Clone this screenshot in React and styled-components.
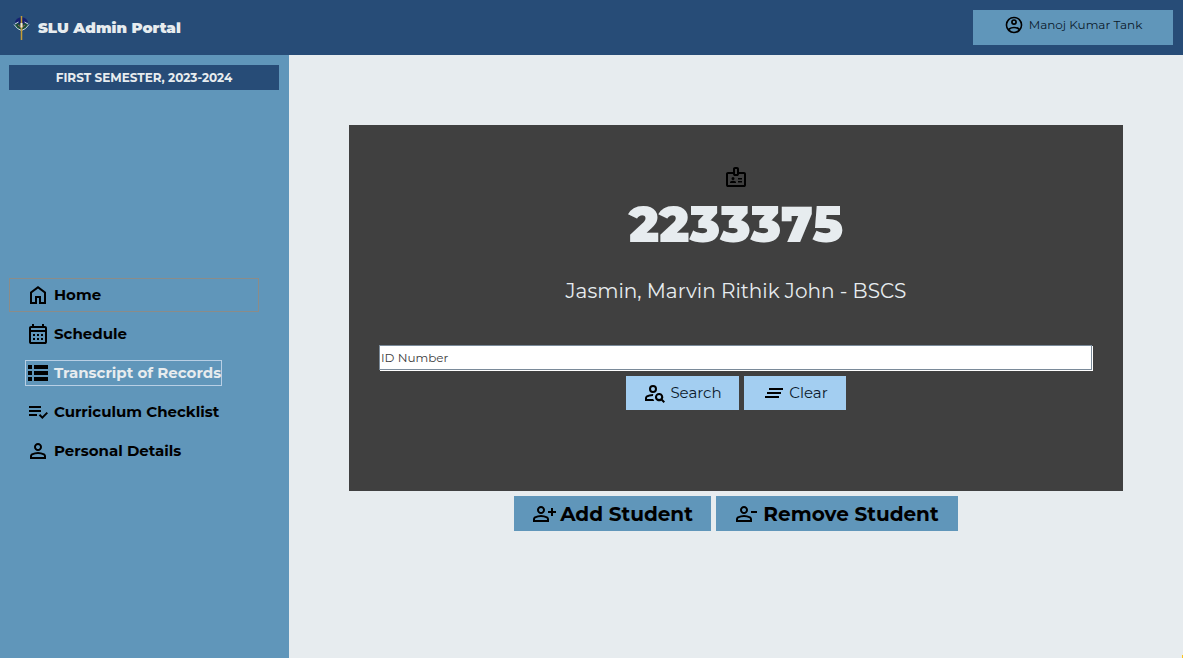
import React, { useState } from 'react';
import styled, { createGlobalStyle, ThemeProvider } from 'styled-components';

const theme = {
  navy: '#274c77',
  blue: '#6096ba',
  sky: '#a3cef1',
  mist: '#e7ecef',
  stone: '#8b8c89',
  charcoal: '#404040',
};

const GlobalStyle = createGlobalStyle`
  *, *::before, *::after { box-sizing: border-box; }
  body {
    margin: 0;
    background: ${theme.mist};
    font-family: Montserrat, Inter, "Open Sans", sans-serif;
    color: #000;
  }
  button, input { font-family: inherit; color: inherit; }
`;

const Page = styled.div`
  display: flex;
  flex-direction: column;
  min-height: 100vh;
`;

const Header = styled.header`
  display: flex;
  align-items: center;
  justify-content: space-between;
  height: 55px;
  padding: 0 10px 0 13px;
  background: ${({ theme }) => theme.navy};
`;

const Brand = styled.h1`
  display: flex;
  align-items: center;
  gap: 8px;
  margin: 0;
  font-size: 15px;
  line-height: 24px;
  font-weight: 900;
  color: ${({ theme }) => theme.mist};
`;

const Body = styled.div`
  display: flex;
  flex: 1;
`;

const Sidebar = styled.aside`
  display: flex;
  flex-direction: column;
  flex: none;
  width: 289px;
  padding: 10px 10px 2px 9px;
  background: ${({ theme }) => theme.blue};
`;

const Term = styled.div`
  background: ${({ theme }) => theme.navy};
  color: ${({ theme }) => theme.mist};
  font-size: 12px;
  line-height: 25px;
  font-weight: 700;
  text-align: center;
`;

const Nav = styled.nav`
  display: flex;
  flex-direction: column;
  gap: 5px;
  width: 250px;
  margin: auto 0;
`;

const NavButton = styled.button`
  display: flex;
  align-items: center;
  height: 34px;
  padding: 0 0 0 15px;
  border: 1px solid ${({ $outlined, theme }) => ($outlined ? theme.stone : 'transparent')};
  background: none;
  font-size: 15px;
  line-height: 24px;
  font-weight: 700;
  text-align: left;
  color: ${({ $active, theme }) => ($active ? theme.mist : '#000')};
  cursor: pointer;
`;

const NavLabel = styled.span`
  display: flex;
  align-items: center;
  gap: 4px;
  border: 1px solid ${({ $active }) => ($active ? '#b8cfe5' : 'transparent')};
  white-space: nowrap;
`;

const Main = styled.main`
  display: flex;
  flex-direction: column;
  flex: 1;
  gap: 5px;
  min-width: 0;
  padding: 70px 60px;
`;

const Card = styled.section`
  display: flex;
  flex-direction: column;
  align-items: center;
  padding: 40px 30px 81px;
  background: ${({ theme }) => theme.charcoal};
  color: ${({ theme }) => theme.mist};
`;

const StudentId = styled.h2`
  margin: 4px 0 22px;
  font-size: 50px;
  line-height: 64px;
  font-weight: 900;
`;

const StudentName = styled.p`
  margin: 0 0 42px;
  font-size: 20px;
  line-height: 24px;
`;

const SearchForm = styled.form`
  display: flex;
  flex-direction: column;
  gap: 5px;
  width: 100%;
`;

const IdInput = styled.input`
  height: 25px;
  margin: 0 1px 1px 0;
  padding: 0 1px;
  border: 1px solid #7a8a99;
  border-radius: 0;
  box-shadow: 1px 1px 0 #fff;
  background: #fff;
  color: #000;
  font-size: 12px;
  outline: none;
  &::placeholder { color: #404040; opacity: 1; }
`;

const ButtonRow = styled.div`
  display: flex;
  justify-content: center;
  gap: 5px;
`;

const ActionButton = styled.button`
  display: flex;
  align-items: center;
  justify-content: center;
  gap: 3px;
  width: ${({ $width }) => $width}px;
  height: 34px;
  padding: 0;
  border: 0;
  background: ${({ theme }) => theme.sky};
  color: #0b1a2c;
  font-size: 15px;
  line-height: 24px;
  white-space: nowrap;
  cursor: pointer;
`;

const StudentButton = styled(ActionButton)`
  gap: 4px;
  height: 35px;
  background: ${({ theme }) => theme.blue};
  color: #000;
  font-size: 20px;
  font-weight: 700;
`;

const UserButton = styled(ActionButton)`
  align-items: flex-start;
  gap: 5px;
  height: 35px;
  padding-top: 5px;
  background: ${({ theme }) => theme.blue};
  font-size: 12px;
  line-height: 20px;
`;

const Spark = styled.span`
  position: fixed;
  right: 0;
  bottom: 0;
  width: 1px;
  height: 3px;
  background: #ffc61a;
`;

const Svg = styled.svg`
  flex: none;
  width: ${({ $size = 24 }) => $size}px;
  height: ${({ $size = 24 }) => $size}px;
  fill: #000;
`;

const person =
  'M9 12q-1.650 0-2.825-1.175T5 8t1.175-2.825T9 4t2.825 1.175T13 8t-1.175 2.825T9 12Zm-8 8v-2.800q0-.850.438-1.562T2.600 14.550q1.550-.775 3.150-1.162T9 13t3.250.388 3.150 1.162q.725.375 1.163 1.088T17 17.200V20Zm2-2h12v-.800q0-.275-.137-.500t-.363-.350q-1.350-.675-2.725-1.012T9 15t-2.775.338T3.500 16.350q-.225.125-.363.350T3 17.200Zm6-8q.825 0 1.413-.587T11 8t-.587-1.412T9 6t-1.412.588T7 8t.588 1.413T9 10Z';

const shapes = {
  home: 'M6 19h3v-6h6v6h3v-9l-6-4.500L6 10Zm-2 2V9l8-6 8 6v12h-7v-6h-2v6Z',
  schedule:
    'M5 22q-.825 0-1.413-.587T3 20V6q0-.825.587-1.412T5 4h1V2h2v2h8V2h2v2h1q.825 0 1.413.588T21 6v14q0 .825-.587 1.413T19 22Zm0-2h14V10H5ZM5 8h14V6H5ZM7 12h2v2H7Zm4 0h2v2h-2Zm4 0h2v2h-2ZM7 16h2v2H7Zm4 0h2v2h-2Zm4 0h2v2h-2Z',
  records: 'M2 4h4v4H2ZM8 4h14v4H8ZM2 10h4v4H2Zm6 0h14v4H8ZM2 16h4v4H2Zm6 0h14v4H8Z',
  checklist:
    'M3 6h12v2H3Zm0 4h12v2H3Zm0 4h8v2H3Zm13.350 5-3.550-3.550 1.400-1.400 2.150 2.100 4.250-4.250 1.400 1.450Z',
  add: person + 'M19 14v-3h-3V9h3V6h2v3h3v2h-3v3Z',
  remove: person + 'M16 9h6v2h-6Z',
  clear: 'M3 17v-2h14v2Zm2-4v-2h14v2Zm2-4V7h14v2Z',
  search:
    'M10 12a4 4 0 1 1 0-8 4 4 0 0 1 0 8Zm0-2a2 2 0 1 0 0-4 2 2 0 0 0 0 4ZM2 20v-2.800q0-.825.425-1.550t1.175-1.100q1.275-.650 2.875-1.100T10 13h.350q-.400.950-.425 2-2.050 0-3.463.463T4.500 16.350q-.500.250-.500.850v.800h6.300q.200.700.600 1.300l.350.700Zm18.600 2-2.300-2.300a4.200 4.200 0 1 1 1.400-1.400L22 20.600ZM16.100 18.100a2.100 2.100 0 1 0 0-4.200 2.100 2.100 0 0 0 0 4.200Z',
  account:
    'M12 2a10 10 0 1 1 0 20 10 10 0 0 1 0-20Zm0 2a8 8 0 0 0-6.850 12.125Q8.200 14 12 14t6.850 2.125A8 8 0 0 0 12 4Zm0 12q-3 0-5.250 1.700Q9 20 12 20t5.250-2.300Q15 16 12 16Zm0-11a3.500 3.500 0 1 1 0 7 3.500 3.500 0 0 1 0-7Zm0 2a1.500 1.500 0 1 0 0 3 1.500 1.500 0 0 0 0-3Z',
  badge:
    'M4 22q-.825 0-1.413-.587T2 20V9q0-.825.587-1.412T4 7h5V4q0-.825.588-1.412T11 2h2q.825 0 1.413.588T15 4v3h5q.825 0 1.413.588T22 9v11q0 .825-.587 1.413T20 22Zm0-2h16V9h-5q0 .825-.587 1.413T13 11h-2q-.825 0-1.412-.587T9 9H4Zm7-11h2V4h-2ZM6 18v-.450q0-.900.750-1.325T9 15.750t2.250.475.750 1.325V18Zm3-3a1.500 1.500 0 1 1 0-3 1.500 1.500 0 0 1 0 3Zm5-.500V13h4v1.500Zm0 3V16h4v1.500Z',
};

function Icon({ name, size }) {
  return (
    <Svg viewBox="0 0 24 24" $size={size} aria-hidden="true">
      <path fillRule="evenodd" d={shapes[name]} />
    </Svg>
  );
}

function Crest() {
  return (
    <svg width="17" height="26" viewBox="0 0 17 26" aria-hidden="true">
      <path d="M2 7Q3 3 8.500 2 14 3 15 7L12 9H5Z" fill="#15206f" />
      <path d="M1.500 10 5 8 8.500 10 12 8 15.500 10 12.500 13.500 8.500 15 4.500 13.500Z" fill="#1d5138" />
      <path d="M1 9.500 4.500 13.500 8.500 15.500 12.500 13.500 16 9.500M2 9 5.500 7M15 9 11.500 7" fill="none" stroke="#cdd6df" strokeWidth="1" />
      <path d="M5 10 8.500 12.500 12 10" fill="none" stroke="#9a5a64" strokeWidth="1" />
      <path d="M8.500 1V25" stroke="#c59c35" strokeWidth="1.500" />
      <path d="M8.500 8V12.500" stroke="#f2ead0" strokeWidth="2" />
    </svg>
  );
}

const links = [
  ['home', 'Home'],
  ['schedule', 'Schedule'],
  ['records', 'Transcript of Records'],
  ['checklist', 'Curriculum Checklist'],
];

export default function App() {
  const [active, setActive] = useState('records');
  const [query, setQuery] = useState('');
  const navItem = (id, label, icon) => (
    <NavButton
      key={id}
      type="button"
      $outlined={id === 'home'}
      $active={active === id}
      onClick={() => setActive(id)}
    >
      <NavLabel $active={active === id}>
        {icon}
        {label}
      </NavLabel>
    </NavButton>
  );

  return (
    <ThemeProvider theme={theme}>
      <GlobalStyle />
      <Page>
        <Header>
          <Brand>
            <Crest />
            SLU Admin Portal
          </Brand>
          <UserButton type="button" $width={200}>
            <Icon name="account" size={20} />
            Manoj Kumar Tank
          </UserButton>
        </Header>
        <Body>
          <Sidebar>
            <Term>FIRST SEMESTER, 2023-2024</Term>
            <Nav>
              {links.map(([id, label]) => navItem(id, label, <Icon name={id} />))}
              {navItem(
                'personal',
                'Personal Details',
                <Svg viewBox="-3 0 24 24" aria-hidden="true">
                  <path fillRule="evenodd" d={person} />
                </Svg>
              )}
            </Nav>
          </Sidebar>
          <Main>
            <Card>
              <Icon name="badge" />
              <StudentId>2233375</StudentId>
              <StudentName>Jasmin, Marvin Rithik John - BSCS</StudentName>
              <SearchForm onSubmit={(e) => e.preventDefault()}>
                <IdInput
                  aria-label="ID Number"
                  placeholder="ID Number"
                  value={query}
                  onChange={(e) => setQuery(e.target.value)}
                />
                <ButtonRow>
                  <ActionButton type="submit" $width={113}>
                    <Icon name="search" />
                    Search
                  </ActionButton>
                  <ActionButton type="button" $width={102} onClick={() => setQuery('')}>
                    <Icon name="clear" />
                    Clear
                  </ActionButton>
                </ButtonRow>
              </SearchForm>
            </Card>
            <ButtonRow>
              <StudentButton type="button" $width={197}>
                <Icon name="add" />
                Add Student
              </StudentButton>
              <StudentButton type="button" $width={242}>
                <Icon name="remove" />
                Remove Student
              </StudentButton>
            </ButtonRow>
          </Main>
        </Body>
      </Page>
      <Spark />
    </ThemeProvider>
  );
}
